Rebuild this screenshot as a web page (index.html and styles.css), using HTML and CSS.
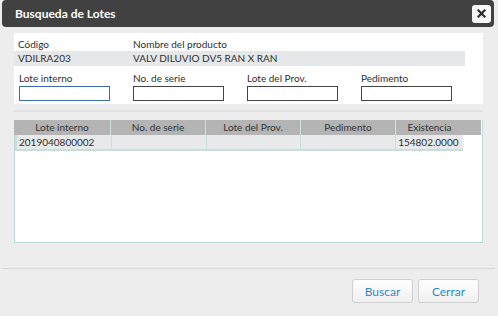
FILE: index.html
```html
<!DOCTYPE html>
<html lang="es">
<head>
  <meta charset="UTF-8" />
  <title>Busqueda de Lotes</title>
  <link rel="stylesheet" href="styles.css">
</head>
<body>
  <div class="dialog">
    <div class="titlebar">
      <span class="title">Busqueda de Lotes</span>
      <button class="close" title="Cerrar">
        <svg width="9" height="9" viewBox="0 0 9 9"><path d="M1.5 1.5 L7.5 7.5 M7.5 1.5 L1.5 7.5" stroke="#2b2b2b" stroke-width="2.2" stroke-linecap="square"/></svg>
      </button>
    </div>

    <div class="panel">
      <div class="info-row labels">
        <span class="col-code">Código</span>
        <span>Nombre del producto</span>
      </div>
      <div class="info-row values">
        <span class="col-code">VDILRA203</span>
        <span>VALV DILUVIO DV5 RAN X RAN</span>
      </div>
      <div class="filters">
        <label>Lote interno<input type="text" class="focused"></label>
        <label>No. de serie<input type="text"></label>
        <label>Lote del Prov.<input type="text"></label>
        <label>Pedimento<input type="text"></label>
      </div>
    </div>

    <hr class="rule">

    <div class="grid">
      <div class="grid-head">
        <span class="c1">Lote interno</span>
        <span class="c2">No. de serie</span>
        <span class="c3">Lote del Prov.</span>
        <span class="c4">Pedimento</span>
        <span class="c5">Existencia</span>
      </div>
      <div class="grid-row">
        <span class="c1 left">2019040800002</span>
        <span class="c2"></span>
        <span class="c3"></span>
        <span class="c4"></span>
        <span class="c5 left">154802.0000</span>
      </div>
    </div>

    <div class="footer">
      <button class="btn">Buscar</button>
      <button class="btn">Cerrar</button>
    </div>
  </div>
</body>
</html>
```

FILE: styles.css
```css
body {
  margin: 0;
  background: #ededed;
  font-family: Lato, "Open Sans", sans-serif;
  font-size: 10px;
  color: #2e2e2e;
}
.dialog {
  width: 498px;
  height: 316px;
}
.titlebar {
  margin: 0 4px 0 2px;
  height: 27px;
  background: #414141;
  border-radius: 4px;
  display: flex;
  align-items: center;
  justify-content: space-between;
  padding: 0 3px 0 13px;
}
.title {
  color: #fff;
  font-weight: bold;
  font-size: 12px;
}
.close {
  width: 19px;
  height: 18px;
  border: none;
  border-radius: 3px;
  background: #f7f7f7;
  padding: 0;
  display: flex;
  align-items: center;
  justify-content: center;
}
.panel {
  background: #fff;
  margin: 6px 15px 0 14px;
  padding: 4px 0 3px 0;
}
.info-row {
  display: flex;
  height: 15px;
  line-height: 15px;
  padding-left: 4px;
  margin-right: 18px;
}
.info-row.labels {
  height: 14px;
}
.info-row.values {
  background: #e6e7e8;
}
.col-code {
  width: 115px;
}
.filters {
  display: flex;
  gap: 23px;
  padding: 5px 0 0 5px;
}
.filters label {
  display: flex;
  flex-direction: column;
  width: 91px;
  line-height: 14px;
}
.filters input {
  margin: 1px 0 0 0;
  height: 15px;
  box-sizing: border-box;
  border: 1px solid #444;
  padding: 0;
  outline: none;
}
.filters input.focused {
  border-color: #3d6bb6;
}
.rule {
  border: none;
  border-top: 2px solid #e2e2e2;
  margin: 6px 15px 0 14px;
}
.grid {
  margin: 8px 15px 0 14px;
  height: 123px;
  box-sizing: border-box;
  background: #fff;
  border: 1px solid #bcd9d5;
  border-top: none;
}
.grid-head, .grid-row {
  display: flex;
  height: 15px;
  line-height: 15px;
}
.grid-head {
  background: #b4b4b4;
  margin-left: -1px;
  margin-right: 1px;
  color: #333;
}
.grid-head span {
  text-align: center;
  border-left: 1px solid #cfe3e0;
  box-sizing: border-box;
}
.grid-head span:first-child {
  border-left: none;
}
.grid-row {
  height: 16px;
  width: 448px;
  background: #e8e9ea;
  border-bottom: 2px solid #c7dedb;
  box-sizing: border-box;
  line-height: 14px;
}
.grid-row span {
  border-left: 1px solid #c7dedb;
  box-sizing: border-box;
}
.grid-row span.c1 {
  border-left: 2px solid #c7dedb;
}
.left {
  text-align: left;
  padding-left: 2px;
}
.c1 { width: 96px; }
.c2 { width: 95px; }
.c3 { width: 95px; }
.c4 { width: 95px; }
.c5 { width: 68px; }
.footer {
  margin: 25px 3px 0 2px;
  border-top: 1px solid #d6d6d6;
  display: flex;
  justify-content: flex-end;
  gap: 5px;
  padding: 10px 16px 0 0;
}
.btn {
  width: 61px;
  height: 24px;
  font-family: Lato, "Open Sans", sans-serif;
  font-size: 12px;
  color: #2a8bc8;
  background: linear-gradient(#ffffff, #f0f0f0);
  border: 1px solid #cfcfcf;
  border-radius: 3px;
  padding: 0;
}
```
